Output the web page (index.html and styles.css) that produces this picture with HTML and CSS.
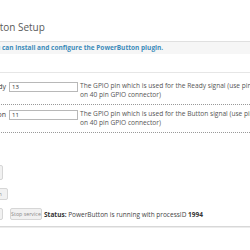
FILE: index.html
```html
<!DOCTYPE html>
<html lang="en">
<head>
  <meta charset="UTF-8">
  <title>PowerButton Setup</title>
  <link rel="stylesheet" href="styles.css">
</head>
<body>

  <div class="page">
    <h2 class="title">PowerButton Setup</h2>
    <div class="info">Here you can install and configure the PowerButton plugin.</div>

    <div class="settings">
      <div class="row">
        <label class="row-label">GPIO Ready</label>
        <input class="row-input" type="text" value="13">
        <div class="row-help">The GPIO pin which is used for the Ready signal (use pin 7<br>on 40 pin GPIO connector)</div>
      </div>
      <div class="row">
        <label class="row-label">GPIO Button</label>
        <input class="row-input" type="text" value="11">
        <div class="row-help">The GPIO pin which is used for the Button signal (use pin 5<br>on 40 pin GPIO connector)</div>
      </div>
    </div>

    <div class="actions">
      <div class="action-row">
        <button class="btn btn-save">Save settings</button>
      </div>
      <div class="action-row">
        <button class="btn btn-install">Uninstall PowerButton</button>
      </div>
      <div class="action-row">
        <button class="btn btn-start">Start service</button>
        <button class="btn btn-stop">Stop service</button>
        <span class="status"><b>Status:</b> PowerButton is running with processID <b>1994</b></span>
      </div>
    </div>

    <div class="divider"></div>
  </div>

</body>
</html>
```

FILE: styles.css
```css
body {
  margin: 0;
  overflow: hidden;
  font-family: "Open Sans", "DejaVu Sans", sans-serif;
  color: #444;
  background: #fff;
}
.page {
  margin-left: -60px;
  width: 420px;
}
.title {
  margin: 20px 0 0 0;
  padding-left: 14px;
  font-size: 10px;
  font-weight: normal;
  color: #5a5a5a;
  line-height: 14px;
}
.info {
  margin-top: 7px;
  border-top: 1px solid #e0e0e0;
  background: #f6f6f6;
  padding: 2px 0 2px 31px;
  font-size: 6.5px;
  line-height: 8px;
  font-weight: bold;
  color: #3b8bba;
}
.settings {
  margin-top: 18px;
  border-top: 1px solid #e6e6e6;
  padding-top: 4px;
}
.row {
  display: flex;
  align-items: flex-start;
  padding: 4px 0 5px 0;
  border-bottom: 1px dotted #999;
}
.row-label {
  width: 66px;
  text-align: right;
  font-size: 7px;
  line-height: 10px;
  margin-top: 1px;
  color: #444;
}
.row-input {
  box-sizing: border-box;
  width: 69px;
  height: 10px;
  margin: 1px 0 0 3px;
  padding: 0 2px;
  border: 1px solid #b8b8b8;
  font-family: "Open Sans", "DejaVu Sans", sans-serif;
  font-size: 6px;
  color: #333;
  outline: none;
}
.row-help {
  margin-left: 2px;
  font-size: 6.6px;
  line-height: 9px;
  white-space: nowrap;
  color: #555;
}
.actions {
  margin-top: 32px;
  display: flex;
  flex-direction: column;
  gap: 8px;
}
.action-row {
  display: flex;
  align-items: center;
}
.btn {
  box-sizing: border-box;
  height: 12px;
  padding: 0;
  border: 1px solid #d6d6d6;
  border-radius: 2px;
  background: #f1f1f1;
  font-family: "Open Sans", "DejaVu Sans", sans-serif;
  font-size: 5.3px;
  color: #8a8a8a;
  text-align: center;
}
.btn-save {
  width: 63px;
  height: 15px;
}
.btn-install {
  width: 68px;
}
.btn-start {
  width: 63px;
}
.btn-stop {
  width: 32px;
  margin-left: 7px;
}
.status {
  margin-left: 2px;
  font-size: 6.5px;
  color: #444;
  white-space: nowrap;
}
.status b {
  color: #333;
}
.divider {
  margin-top: 6px;
  border-top: 1px solid #d8d8d8;
  border-bottom: 1px solid #ececec;
}
```
